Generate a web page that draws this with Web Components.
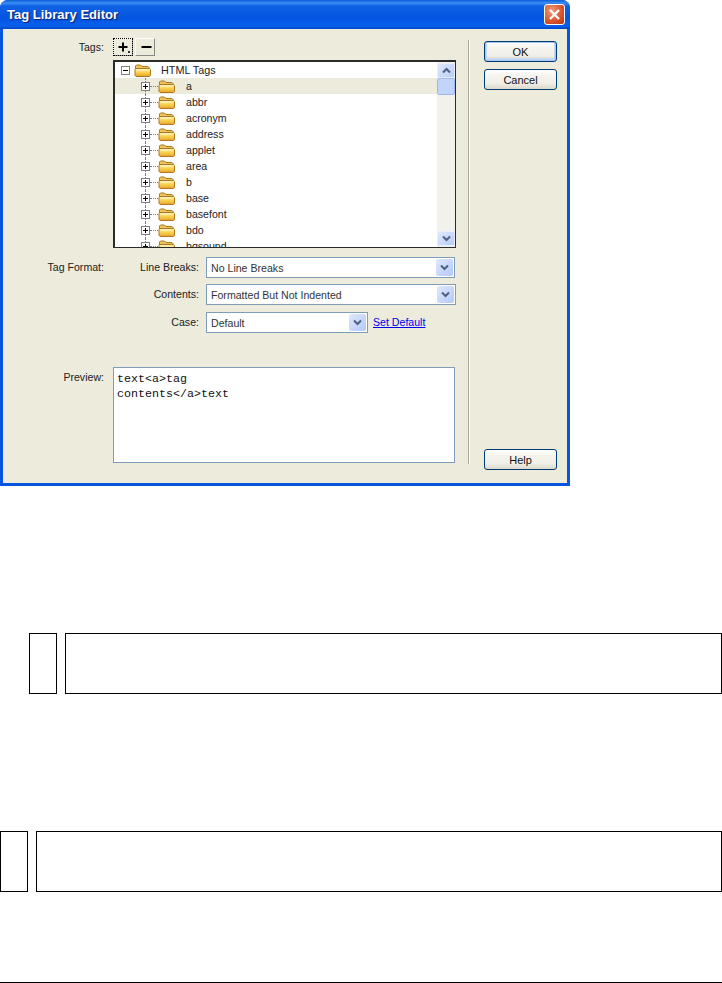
<!DOCTYPE html>
<html lang="en">
<head>
<meta charset="utf-8">
<title>Tag Library Editor</title>
<style>
  html, body { margin: 0; background: #fff; }
  body { width: 722px; height: 983px; overflow: hidden; font: 10.6px "Liberation Sans", Arial, sans-serif; color: #000; }
</style>
</head>
<body>
<xp-dialog heading="Tag Library Editor">
  <form-row label="Tags:" top="9">
    <tool-button glyph="plus" focused></tool-button>
    <tool-button glyph="minus"></tool-button>
  </form-row>
  <tag-tree></tag-tree>
  <format-row group="Tag Format:" label="Line Breaks:" top="9"><xp-combo value="No Line Breaks" width="249"></xp-combo></format-row>
  <format-row label="Contents:" top="6"><xp-combo value="Formatted But Not Indented" width="250"></xp-combo></format-row>
  <format-row label="Case:" top="7">
    <xp-combo value="Default" width="162"></xp-combo>
    <a-link>Set Default</a-link>
  </format-row>
  <preview-box label="Preview:">text&lt;a&gt;tag
contents&lt;/a&gt;text</preview-box>
  <xp-button slot="actions" default>OK</xp-button>
  <xp-button slot="actions">Cancel</xp-button>
  <xp-button slot="help">Help</xp-button>
</xp-dialog>
<note-box indent="29" top="147"></note-box>
<note-box indent="0" top="137"></note-box>
<page-rule></page-rule>

<script>
const chevron = (dir) => /*html*/ `
  <svg width="9" height="7" viewBox="0 0 9 7">
    <path d="${dir === "up" ? "M1 5.500 4.500 2 8 5.500" : "M1 1.500 4.500 5 8 1.500"}" fill="none" stroke="#4d6185" stroke-width="2"/>
  </svg>`;

// open yellow folder, same drawing for root and children
const folder = /*html*/ `
  <svg width="17" height="13" viewBox="0 0 17 13">
    <defs>
      <linearGradient id="body" x1="0" y1="0" x2="0" y2="1">
        <stop offset="0" stop-color="#ffeea6"/>
        <stop offset=".5" stop-color="#fdd052"/>
        <stop offset="1" stop-color="#e9a227"/>
      </linearGradient>
    </defs>
    <path d="M1.500 10V2l1-1h4l1.500 1.500h6l1 1V6H1.500z" fill="#eec25c" stroke="#a87a1c"/>
    <path d="M1 11.500V5.500l1-1h13.500l1 1v6l-1 1H2z" fill="url(#body)" stroke="#a87a1c"/>
    <path d="M2.500 6h12" stroke="#fff8d2"/>
  </svg>`;

const expander = (open) => /*html*/ `
  <svg width="9" height="9" viewBox="0 0 9 9">
    <rect x=".5" y=".5" width="8" height="8" fill="#fff" stroke="#808080"/>
    <path d="M2 4.500h5${open ? "" : "M4.500 2v5"}" stroke="#000"/>
  </svg>`;

customElements.define(
  "xp-dialog",
  class extends HTMLElement {
    constructor() {
      super().attachShadow({ mode: "open" }).innerHTML = /*html*/ `
        <style>
          :host { display: flex; flex-direction: column; width: 570px; height: 486px; box-sizing: border-box; background: #0855dd; border-radius: 8px 8px 0 0; overflow: hidden; }
          .title { flex: none; height: 29px; display: flex; align-items: center; justify-content: space-between; box-sizing: border-box; padding: 0 5px 0 7px;
            background: linear-gradient(#0a5bd8 0, #3c8ef3 3px, #0f62e4 6px, #0355e0 18px, #0a60ee 26px, #0243c4 29px); }
          .title span { color: #fff; font: bold 13px "Liberation Sans", Arial, sans-serif; text-shadow: 1px 1px 1px #0f1f6e; }
          .close { width: 21px; height: 21px; box-sizing: border-box; border: 1px solid #fff; border-radius: 3px; background: radial-gradient(circle at 35% 30%, #ef9a7c, #d9522a 60%, #b93412); display: flex; align-items: center; justify-content: center; }
          .client { flex: 1; display: flex; margin: 0 3px 3px; background: #ecebdc; min-height: 0; }
          main { width: 466px; box-sizing: border-box; padding-right: 12px; }
          .sep { width: 2px; margin: 11px 0 19px; background: linear-gradient(90deg, #aca899 50%, #fff 50%); flex: none; }
          aside { flex: 1; display: flex; flex-direction: column; padding: 12px 10px 13px 14px; gap: 7px; }
          .help { margin-top: auto; }
        </style>
        <div class="title">
          <span></span>
          <div class="close"><svg width="13" height="13" viewBox="0 0 13 13"><path d="M2 2l9 9M11 2l-9 9" stroke="#fff" stroke-width="2.400"/></svg></div>
        </div>
        <div class="client">
          <main><slot></slot></main>
          <div class="sep"></div>
          <aside><slot name="actions"></slot><div class="help"><slot name="help"></slot></div></aside>
        </div>`;
      this.shadowRoot.querySelector("span").textContent = this.getAttribute("heading");
    }
  }
);

customElements.define(
  "form-row",
  class extends HTMLElement {
    constructor() {
      super().attachShadow({ mode: "open" }).innerHTML = /*html*/ `
        <style>
          :host { display: grid; grid-template-columns: 101px 1fr; column-gap: 9px; align-items: start; }
          label { text-align: right; color: #222; line-height: 13px; padding-top: 3px; }
          div { display: flex; gap: 2px; }
        </style>
        <label></label><div><slot></slot></div>`;
      this.shadowRoot.querySelector("label").textContent = this.getAttribute("label");
      this.style.marginTop = this.getAttribute("top") + "px";
    }
  }
);

customElements.define(
  "tool-button",
  class extends HTMLElement {
    constructor() {
      super().attachShadow({ mode: "open" }).innerHTML = /*html*/ `
        <style>
          :host { display: block; width: 20px; height: 18px; box-sizing: border-box; border: 1px solid #fff; border-right-color: #888; border-bottom-color: #888; background: #ecebdc; position: relative; }
          :host([focused]) { outline: 1px dotted #000; outline-offset: -1px; }
          svg { display: block; margin: 3px 0 0 3px; }
        </style>
        <svg width="13" height="11" viewBox="0 0 13 11">
          <path d="${this.getAttribute("glyph") === "plus" ? "M1.500 5h9M6 .5v9" : "M2.500 5h10"}" stroke="#000" stroke-width="2"/>
          ${this.getAttribute("glyph") === "plus" ? '<path d="M11 9h2v2h-2z" fill="#333"/>' : ""}
        </svg>`;
    }
  }
);

customElements.define(
  "tree-row",
  class extends HTMLElement {
    constructor() {
      super().attachShadow({ mode: "open" });
    }

    // attributes are set after createElement, so render on connect
    connectedCallback() {
      const isRoot = this.hasAttribute("root");
      this.shadowRoot.innerHTML = /*html*/ `
        <style>
          :host { display: flex; align-items: center; height: 16px; flex: none; color: #222; position: relative; }
          :host([selected]) { background: #ecebdc; }
          :host([root]) { padding-left: 6px; }
          :host(:not([root])) { padding-left: 26px; }
          .exp { display: flex; flex: none; z-index: 1; }
          .dash { width: 8px; height: 0; border-top: 1px dotted #808080; flex: none; }
          .gap { width: 4px; flex: none; }
          .folder { display: flex; flex: none; }
          span { padding-left: 11px; }
          :host([root]) span { padding-left: 10px; font-size: 10.8px; }
          .line { position: absolute; left: 30px; top: 0; bottom: 0; border-left: 1px dotted #808080; }
        </style>
        ${isRoot ? "" : '<i class="line"></i>'}
        <div class="exp">${expander(isRoot)}</div>
        ${isRoot ? '<div class="gap"></div>' : '<div class="dash"></div>'}
        <div class="folder">${folder}</div>
        <span><slot></slot></span>`;
    }
  }
);

customElements.define(
  "xp-scrollbar",
  class extends HTMLElement {
    constructor() {
      super().attachShadow({ mode: "open" }).innerHTML = /*html*/ `
        <style>
          :host { display: flex; flex-direction: column; width: 18px; flex: none; background: #f3f1ec; padding: 1px 0; box-sizing: border-box; }
          .btn { height: 15px; flex: none; box-sizing: border-box; border: 1px solid #e8eefc; border-radius: 2px; background: linear-gradient(135deg, #dfe8fd, #b9cdf8); display: flex; align-items: center; justify-content: center; }
          .thumb { height: 17px; flex: none; box-sizing: border-box; border: 1px solid #9db7f0; border-radius: 2px; background: #c3d4fb; }
          .track { flex: 1; }
        </style>
        <div class="btn">${chevron("up")}</div>
        <div class="thumb"></div>
        <div class="track"></div>
        <div class="btn">${chevron("down")}</div>`;
    }
  }
);

customElements.define(
  "tag-tree",
  class extends HTMLElement {
    constructor() {
      super().attachShadow({ mode: "open" }).innerHTML = /*html*/ `
        <style>
          :host { display: flex; margin: 4px 0 0 110px; width: 343px; height: 188px; box-sizing: border-box; background: #fff; border: 2px solid #2b2b2b; border-right-width: 1px; border-bottom-width: 1px; }
          .rows { flex: 1; display: flex; flex-direction: column; overflow: hidden; }
        </style>
        <div class="rows"></div>
        <xp-scrollbar></xp-scrollbar>`;
      const rows = this.shadowRoot.querySelector(".rows");
      const addRow = (text, attr) => {
        const row = document.createElement("tree-row");
        if (attr) row.setAttribute(attr, "");
        row.textContent = text;
        rows.append(row);
      };
      addRow("HTML Tags", "root");
      addRow("a", "selected");
      ["abbr", "acronym", "address", "applet", "area", "b", "base", "basefont", "bdo", "bgsound"].forEach((t) => addRow(t));
    }
  }
);

customElements.define(
  "format-row",
  class extends HTMLElement {
    constructor() {
      super().attachShadow({ mode: "open" }).innerHTML = /*html*/ `
        <style>
          :host { display: grid; grid-template-columns: 101px 92px 1fr; column-gap: 3px; align-items: center; color: #222; }
          .group, .label { text-align: right; position: relative; top: -1px; }
          .field { display: flex; align-items: center; gap: 5px; margin-left: 4px; }
          ::slotted(a-link) { position: relative; top: -1px; }
        </style>
        <div class="group"></div><div class="label"></div><div class="field"><slot></slot></div>`;
      this.shadowRoot.querySelector(".group").textContent = this.getAttribute("group") || "";
      this.shadowRoot.querySelector(".label").textContent = this.getAttribute("label");
      this.style.marginTop = this.getAttribute("top") + "px";
    }
  }
);

customElements.define(
  "xp-combo",
  class extends HTMLElement {
    constructor() {
      super().attachShadow({ mode: "open" }).innerHTML = /*html*/ `
        <style>
          :host { display: flex; align-items: center; height: 21px; box-sizing: border-box; border: 1px solid #7f9db9; background: #fff; color: #333; flex: none; }
          span { flex: 1; padding-left: 4px; }
          .btn { width: 17px; height: 17px; margin-right: 1px; display: flex; align-items: center; justify-content: center; background: linear-gradient(135deg, #dfe8fd, #b4c9f8); border-radius: 2px; }
        </style>
        <span></span><div class="btn">${chevron("down")}</div>`;
      this.shadowRoot.querySelector("span").textContent = this.getAttribute("value");
      this.style.width = this.getAttribute("width") + "px";
    }
  }
);

customElements.define(
  "a-link",
  class extends HTMLElement {
    constructor() {
      super().attachShadow({ mode: "open" }).innerHTML = /*html*/ `
        <style>
          :host { display: block; color: #0000ee; text-decoration: underline; white-space: nowrap; }
        </style>
        <slot></slot>`;
    }
  }
);

customElements.define(
  "preview-box",
  class extends HTMLElement {
    constructor() {
      super().attachShadow({ mode: "open" }).innerHTML = /*html*/ `
        <style>
          :host { display: grid; grid-template-columns: 101px 342px; column-gap: 9px; margin-top: 34px; }
          label { text-align: right; color: #222; padding-top: 4px; }
          pre { margin: 0; height: 96px; box-sizing: border-box; border: 1px solid #7f9db9; background: #fff; padding: 4px 3px; font: 11.67px/15px "Liberation Mono", "Courier New", monospace; color: #111; }
        </style>
        <label></label><pre><slot></slot></pre>`;
      this.shadowRoot.querySelector("label").textContent = this.getAttribute("label");
    }
  }
);

customElements.define(
  "xp-button",
  class extends HTMLElement {
    constructor() {
      super().attachShadow({ mode: "open" }).innerHTML = /*html*/ `
        <style>
          :host { display: flex; align-items: center; justify-content: center; width: 73px; height: 21px; box-sizing: border-box; border: 1px solid #003c74; border-radius: 3px; background: linear-gradient(#fff, #f5f4ee 30%, #f0efe8 70%, #dcd8cc); color: #111; font-size: 11px; }
          :host([default]) { box-shadow: inset 0 0 0 1px #a9c4ee, inset 0 -1px 0 2px #c4d7f4; }
        </style>
        <slot></slot>`;
    }
  }
);

customElements.define(
  "note-box",
  class extends HTMLElement {
    constructor() {
      super().attachShadow({ mode: "open" }).innerHTML = /*html*/ `
        <style>
          :host { display: flex; height: 61px; gap: 8px; box-sizing: border-box; }
          div { border: 1px solid #000; box-sizing: border-box; }
          .num { width: 28px; flex: none; }
          .text { flex: 1; }
        </style>
        <div class="num"></div><div class="text"></div>`;
      this.style.paddingLeft = this.getAttribute("indent") + "px";
      this.style.marginTop = this.getAttribute("top") + "px";
    }
  }
);

customElements.define(
  "page-rule",
  class extends HTMLElement {
    constructor() {
      super().attachShadow({ mode: "open" }).innerHTML = /*html*/ `
        <style>
          :host { display: block; height: 1px; background: #000; margin-top: 90px; }
        </style>`;
    }
  }
);
</script>
</body>
</html>
